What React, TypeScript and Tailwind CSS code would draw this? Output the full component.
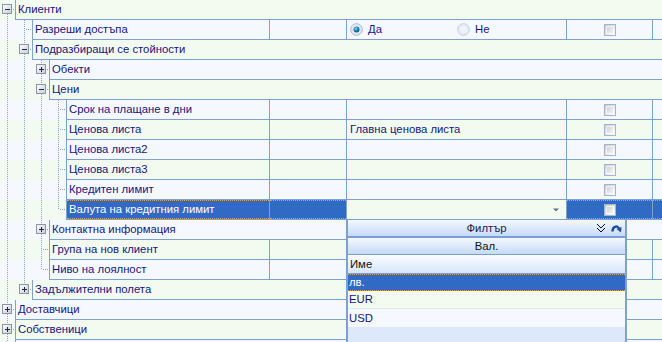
import type { ReactNode } from "react";

type Row = {
  label: string;
  level: number;
  group?: boolean;
  open?: boolean;
  // tree line per level: f = full, t = top half, b = bottom half
  lines: string;
  value?: string;
  radio?: boolean;
  check?: boolean;
  selected?: boolean;
};

const rows: Row[] = [
  { label: "Клиенти", level: 0, group: true, open: true, lines: "b" },
  { label: "Разреши достъпа", level: 1, lines: "ff", radio: true, check: true },
  { label: "Подразбиращи се стойности", level: 1, group: true, open: true, lines: "ff" },
  { label: "Обекти", level: 2, group: true, lines: "fff" },
  { label: "Цени", level: 2, group: true, open: true, lines: "fff" },
  { label: "Срок на плащане в дни", level: 3, lines: "ffff", check: true },
  { label: "Ценова листа", level: 3, lines: "ffff", value: "Главна ценова листа", check: true },
  { label: "Ценова листа2", level: 3, lines: "ffff", check: true },
  { label: "Ценова листа3", level: 3, lines: "ffff", check: true },
  { label: "Кредитен лимит", level: 3, lines: "ffff", check: true },
  { label: "Валута на кредитния лимит", level: 3, lines: "ffft", check: true, selected: true },
  { label: "Контактна информация", level: 2, group: true, lines: "fff" },
  { label: "Група на нов клиент", level: 2, lines: "fff", check: true },
  { label: "Ниво на лоялност", level: 2, lines: "fft", check: true },
  { label: "Задължителни полета", level: 1, group: true, lines: "ft" },
  { label: "Доставчици", level: 0, group: true, lines: "f" },
  { label: "Собственици", level: 0, group: true, lines: "f" },
  { label: "", level: 0, group: true, lines: "f" },
];

const DOT = "#8aa3c8";

function Indent({ row }: { row: Row }) {
  const w = 15 + 17 * row.level;
  const lx = 7 + 17 * row.level;
  const parts: ReactNode[] = [];
  row.lines.split("").forEach((c, l) => {
    const x = 7 + 17 * l + 0.5;
    if (c === "f") parts.push(<line key={"v" + l} x1={x} y1={0} x2={x} y2={20} />);
    if (c === "t") parts.push(<line key={"v" + l} x1={x} y1={0} x2={x} y2={10} />);
    if (c === "b") parts.push(<line key={"v" + l} x1={x} y1={10} x2={x} y2={20} />);
  });
  return (
    <svg width={w} height={20} className="shrink-0" shapeRendering="crispEdges">
      <defs>
        <linearGradient id="btnGrad" x1="0" y1="0" x2="1" y2="1">
          <stop offset="0" stopColor="#ffffff" />
          <stop offset="1" stopColor="#c6cbd5" />
        </linearGradient>
      </defs>
      <g stroke={DOT} strokeDasharray="1 1">
        {parts}
        <line x1={lx + 2} y1={9.5} x2={w} y2={9.5} />
      </g>
      {row.group && (
        <g>
          <rect x={lx - 5 + 0.5} y={4.5} width={9} height={9} fill="url(#btnGrad)" stroke="#8d96a6" />
          <line x1={lx - 2} y1={9.5} x2={lx + 3} y2={9.5} stroke="#1f2a44" />
          {!row.open && <line x1={lx + 0.5} y1={7} x2={lx + 0.5} y2={12} stroke="#1f2a44" />}
        </g>
      )}
    </svg>
  );
}

function Radio({ on }: { on?: boolean }) {
  return (
    <svg width={13} height={13} className="shrink-0">
      <defs>
        <radialGradient id="radOn" cx="0.4" cy="0.35" r="0.7">
          <stop offset="0" stopColor="#8fd3f0" />
          <stop offset="0.5" stopColor="#1f84b5" />
          <stop offset="1" stopColor="#0c4f7a" />
        </radialGradient>
      </defs>
      <circle cx={6.5} cy={6.5} r={5.8} fill="#eef3fa" stroke={on ? "#9fb3cf" : "#bccbe2"} />
      <circle cx={6.5} cy={6.5} r={4.3} fill="none" stroke={on ? "#d7e0ec" : "#dfe7f3"} />
      {on && <circle cx={6.5} cy={6.5} r={3} fill="url(#radOn)" />}
    </svg>
  );
}

function Check() {
  return (
    <div className="w-[12px] h-[12px] border border-[#a3b6d4] bg-[linear-gradient(135deg,#c6c6c6,#ffffff)] p-[1px]">
      <div className="w-full h-full border border-white/70" />
    </div>
  );
}

function Focus({ on, children, className = "" }: { on?: boolean; children?: ReactNode; className?: string }) {
  return (
    <div
      className={`h-full flex items-center ${on ? "border-y border-dotted border-[#e8a13a]" : ""} ${className}`}
    >
      {children}
    </div>
  );
}

function GridRow({ row, index }: { row: Row; index: number }) {
  const bg = index % 2 === 0 ? "bg-[#f3faef]" : "bg-[#f5f9ff]";
  const sel = row.selected;
  const cell = "h-full border-l border-b border-[#7da2ce]";
  return (
    <div className={`flex h-[20px] ${bg}`}>
      <Indent row={row} />
      {row.group ? (
        <div className={`flex-1 ${cell} pl-[2px] leading-[19px] whitespace-nowrap`}>{row.label}</div>
      ) : (
        <>
          <div className={`flex-1 ${cell} ${sel ? "bg-[#316ac5] text-white" : ""}`}>
            <Focus on={sel} className="pl-[2px] whitespace-nowrap">
              {row.label}
            </Focus>
          </div>
          <div className={`w-[77px] ${cell} ${sel ? "bg-[#316ac5]" : ""}`}>
            <Focus on={sel} />
          </div>
          <div className={`w-[220px] ${cell} ${sel ? "bg-[#f3faef]" : ""}`}>
            {row.radio ? (
              <div className="flex h-full items-center">
                <div className="flex w-[110px] items-center gap-[5px] pl-[3px]">
                  <Radio on />
                  <span>Да</span>
                </div>
                <div className="flex items-center gap-[5px]">
                  <Radio />
                  <span>Не</span>
                </div>
              </div>
            ) : sel ? (
              <div className="flex h-full items-center justify-end pr-[7px]">
                <svg width={6} height={4}>
                  <path d="M0 0.5 H6 L3 3.5 Z" fill="#5b6f92" />
                </svg>
              </div>
            ) : (
              <div className="pl-[3px] leading-[19px] whitespace-nowrap">{row.value}</div>
            )}
          </div>
          <div className={`w-[86px] ${cell} ${sel ? "bg-[#316ac5]" : ""}`}>
            <Focus on={sel} className="justify-center">
              {row.check && <Check />}
            </Focus>
          </div>
          <div className={`w-[10px] ${cell} ${sel ? "bg-[#316ac5]" : ""}`}>
            <Focus on={sel} />
          </div>
        </>
      )}
    </div>
  );
}

function Popup() {
  const band = "bg-[linear-gradient(#f4f8ff,#c6daf7)] border-[#7a9fd6]";
  return (
    <div className="absolute left-[346px] top-[219px] w-[281px] h-[130px] border-x-2 border-t border-[#7da2ce] bg-[#dde9fa]">
      <div className={`relative h-[18px] border-b-2 ${band} flex items-center justify-center text-[#1c1c4c]`}>
        <span>Филтър</span>
        <div className="absolute right-[3px] top-[4px] flex items-center gap-[6px]">
          <svg width={8} height={9} shapeRendering="crispEdges">
            <path d="M0.5 0.5 L4 4 L7.5 0.5" fill="none" stroke="#111" strokeWidth={1.4} />
            <path d="M0.5 4.5 L4 8 L7.5 4.5" fill="none" stroke="#111" strokeWidth={1.4} />
          </svg>
          <svg width={11} height={9}>
            <path d="M1.5 7.5 C1.5 2.5 6 1 8 4.5" fill="none" stroke="#1d4f9a" strokeWidth={2.4} />
            <path d="M5.5 5 L10.5 3 L10 8.5 Z" fill="#1d4f9a" />
          </svg>
        </div>
      </div>
      <div className={`h-[17px] border-b ${band} flex items-center justify-center text-[#111]`}>Вал.</div>
      <div className="h-[19px] border-b border-[#7a9fd6] bg-[linear-gradient(#fbfdff,#d6e5fa)] pl-[2px] leading-[18px] text-[#111]">
        Име
      </div>
      <div className="h-[17px] bg-[#316ac5] border-y border-dotted border-[#e8a13a] pl-[1px] leading-[15px] text-white">
        лв.
      </div>
      <div className="h-[18px] bg-[#f3faef] border-b border-[#e3eaf2] pl-[1px] leading-[17px]">EUR</div>
      <div className="h-[18px] bg-[#f5f9ff] pl-[1px] leading-[18px]">USD</div>
    </div>
  );
}

export default function App() {
  return (
    <div className="relative w-[662px] h-[342px] overflow-hidden bg-white font-['Liberation_Sans',sans-serif] text-[11.3px] text-[#15157f]">
      {rows.map((row, i) => (
        <GridRow key={i} row={row} index={i} />
      ))}
      <Popup />
    </div>
  );
}
